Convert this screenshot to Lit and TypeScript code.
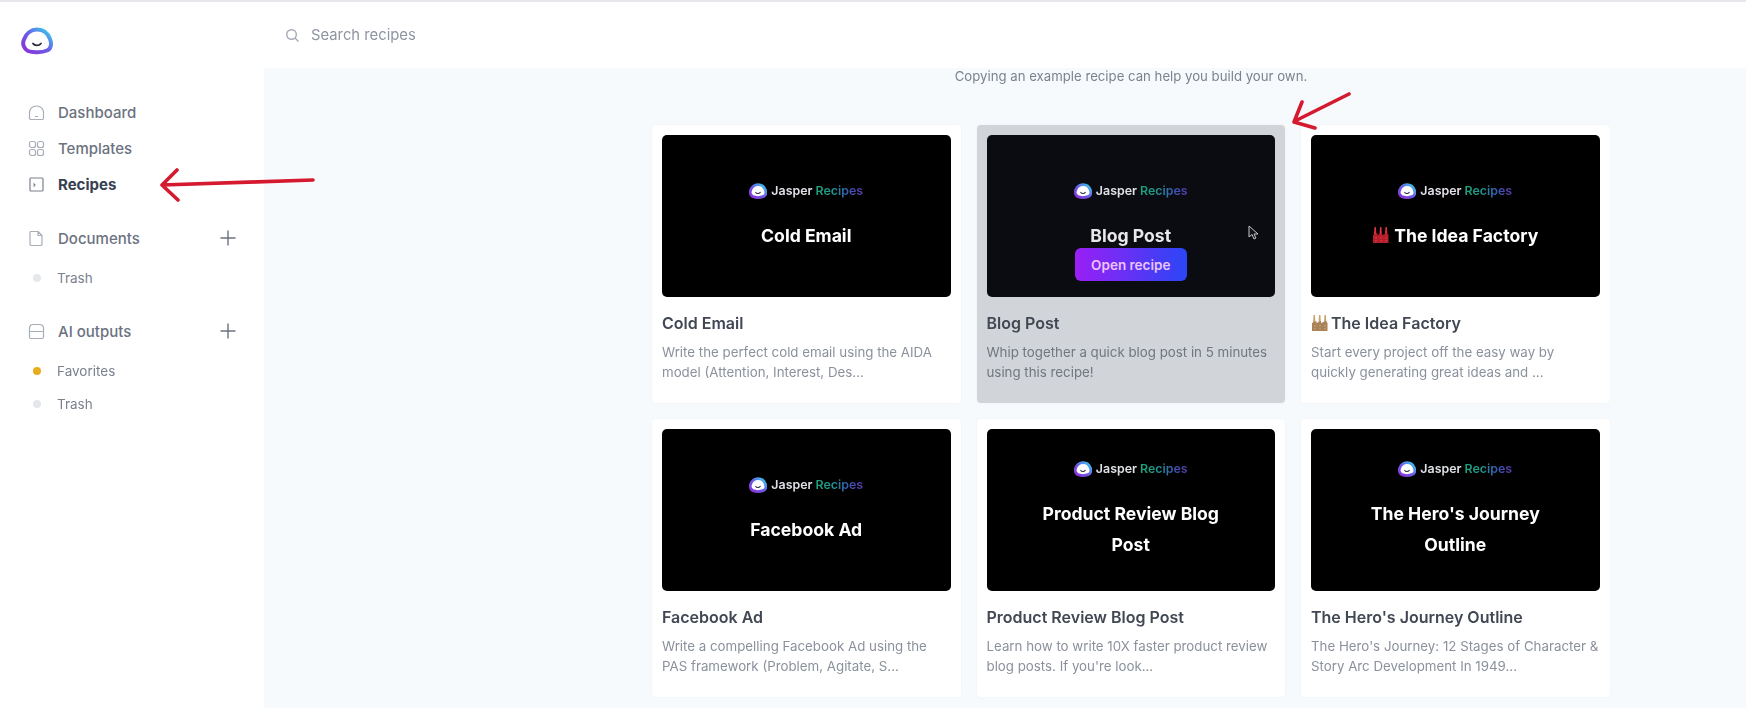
import { LitElement, html, css, svg } from "lit";
import { customElement } from "lit/decorators.js";

const factory = (color: string, roof: string) => html`<svg class="factory" viewBox="0 0 18 18" aria-hidden="true">
  ${svg`<path d="M2.5 1h1.4l.6 9h-2.600zM8 1h1.400l.6 9h-2.600zM13.500 1h1.400l.6 9h-2.600z" fill="${roof}"/>
  <path d="M1 9l4.500-2v2l4.500-2v2l5-2 1.500 2v8H1z" fill="${color}"/>
  <path d="M3 11h2v1.500H3zM8 11h2v1.500H8zM13 11h2v1.500h-2zM3 14h2v1.500H3zM8 14h2v1.500H8zM13 14h2v1.500h-2z" fill="${roof}" opacity=".7"/>`}
</svg>`;

const blob = (sw: number) => svg`
  <defs><linearGradient id="lg${sw}" x1="0" y1="1" x2="1" y2="0">
    <stop offset="0" stop-color="#8b2fd6"/><stop offset=".5" stop-color="#6a5ee8"/><stop offset="1" stop-color="#36d4ee"/>
  </linearGradient></defs>
  <path d="M16 2.500c7 0 11 4 13 9.500 2 5 1 10-3 11.500-5 2-14 2.500-19 .5-4-2-6-7-4-11.500 2-6 7-10 13-10z" fill="#fff" stroke="url(#lg${sw})" stroke-width="${sw}"/>
  <path d="M12 16.500c1.500 2.500 6 2.500 8 0" fill="none" stroke="#2b2b3a" stroke-width="1.800" stroke-linecap="round"/>`;

interface Recipe { thumb: string[]; title: string; desc: string[]; emoji?: boolean; hover?: boolean }

const recipes: Recipe[] = [
  { thumb: ["Cold Email"], title: "Cold Email", desc: ["Write the perfect cold email using the AIDA", "model (Attention, Interest, Des..."] },
  { thumb: ["Blog Post"], title: "Blog Post", desc: ["Whip together a quick blog post in 5 minutes", "using this recipe!"], hover: true },
  { thumb: ["The Idea Factory"], title: "The Idea Factory", desc: ["Start every project off the easy way by", "quickly generating great ideas and ..."], emoji: true },
  { thumb: ["Facebook Ad"], title: "Facebook Ad", desc: ["Write a compelling Facebook Ad using the", "PAS framework (Problem, Agitate, S..."] },
  { thumb: ["Product Review Blog", "Post"], title: "Product Review Blog Post", desc: ["Learn how to write 10X faster product review", "blog posts. If you're look..."] },
  { thumb: ["The Hero's Journey", "Outline"], title: "The Hero's Journey Outline", desc: ["The Hero's Journey: 12 Stages of Character &", "Story Arc Development In 1949..."] },
];

@customElement("app-root")
export class AppRoot extends LitElement {
  static styles = css`
    :host { display: block; width: 1746px; height: 708px; overflow: hidden; position: relative; background: #f7fafd; font-family: Inter, "Noto Sans", sans-serif; color: #6b7280; }
    .frame { display: flex; height: 708px; filter: blur(.6px); border-top: 2px solid #e5e7eb; box-sizing: border-box; }
    .side { width: 264px; flex: none; background: #fff; box-sizing: border-box; padding: 23px 0 0 28px; }
    .logo { display: block; width: 32px; height: 32px; margin: 0 0 37px -7px; }
    .row { display: flex; align-items: center; height: 36px; font-size: 15px; font-weight: 500; color: #6b7280; }
    .row.active { color: #374151; font-weight: 700; }
    .ic { width: 17px; height: 17px; flex: none; margin-right: 13px; fill: none; stroke: #a8aeb8; stroke-width: 1.2; stroke-linejoin: round; }
    .active .ic { stroke: #7b828e; }
    .plus { width: 16px; height: 16px; margin-left: auto; margin-right: 28px; stroke: #6b7280; stroke-width: 1.4; fill: none; }
    .section { margin-top: 18px; }
    .section + .section { margin-top: 19px; }
    .sub { display: flex; align-items: center; height: 33px; font-size: 13.5px; color: #7b828e; }
    .section .row + .sub { margin-top: 5px; }
    .dot { width: 8px; height: 8px; border-radius: 50%; background: #e5e7eb; margin: 0 16px 0 5px; flex: none; }
    .dot.gold { background: #e9ac1e; }
    .main { flex: 1; min-width: 0; display: flex; flex-direction: column; }
    .top { height: 66px; flex: none; background: #fff; display: flex; align-items: center; padding-left: 21px; gap: 11px; font-size: 14.8px; color: #8e95a1; }
    .top svg { width: 15px; height: 15px; stroke: #a5abb5; stroke-width: 1.4; fill: none; }
    .note { margin: 0; text-align: center; font-size: 13.2px; line-height: 17px; padding: 0 136px 0 388px; color: #7b828e; }
    .grid { display: grid; grid-template-columns: repeat(3, 1fr); gap: 16px; padding: 40px 136.5px 0 388px; grid-auto-rows: 278px; }
    .card { background: #fff; border-radius: 4px; padding: 10px; box-sizing: border-box; box-shadow: 0 0 2px rgba(17,24,39,.05); min-width: 0; }
    .card.hover { background: #d1d5da; }
    .thumb { position: relative; height: 162px; background: #000; border-radius: 5px; display: flex; flex-direction: column; align-items: center; justify-content: center; color: #fff; }
    .hover .thumb { background: #0b0c11; color: #e8e8ea; }
    .brand { display: flex; align-items: center; gap: 4px; font-size: 12.4px; font-weight: 600; color: #dfe1e6; margin-bottom: 20px; line-height: 16px; }
    .brand svg { width: 18px; height: 18px; }
    .grad { background: linear-gradient(90deg, #1fa37a 0%, #1f9a8f 35%, #3a58b8 70%, #5a3aa8 100%); -webkit-background-clip: text; background-clip: text; color: transparent; }
    .big { font-size: 17.6px; font-weight: 700; line-height: 31px; text-align: center; display: flex; align-items: center; gap: 4px; }
    .open { position: absolute; left: 50%; top: 113px; width: 112px; height: 33px; transform: translateX(-50%); border-radius: 6px; background: linear-gradient(90deg, #9a1ff5, #2b46f5); color: #eec4ff; font-size: 13.5px; font-weight: 600; display: flex; align-items: center; justify-content: center; }
    .cursor { position: absolute; right: 15px; top: 90px; width: 12px; height: 16px; }
    .title { font-size: 16px; font-weight: 600; color: #414753; margin-top: 15px; line-height: 22px; display: flex; align-items: center; gap: 2px; }
    .desc { font-size: 13.3px; line-height: 20px; color: #8b919c; margin-top: 8px; white-space: nowrap; }
    .hover .desc { color: #71767f; }
    .factory { width: 18px; height: 18px; flex: none; }
    .arrows { position: absolute; inset: 0; width: 1746px; height: 708px; pointer-events: none; fill: none; stroke: #d5192f; stroke-width: 3.6; stroke-linecap: round; stroke-linejoin: round; filter: blur(.4px); }
  `;

  private card(r: Recipe) {
    return html`<article class="card ${r.hover ? "hover" : ""}">
      <div class="thumb">
        <div class="brand"><svg viewBox="0 0 32 28">${blob(5)}</svg><span>Jasper <span class="grad">Recipes</span></span></div>
        ${r.thumb.map(l => html`<div class="big">${r.emoji ? factory("#b3202c", "#e2333f") : ""}${l}</div>`)}
        ${r.hover ? html`<div class="open">Open recipe</div>
          <svg class="cursor" viewBox="0 0 12 16"><path d="M1 1v11l3-2.500 2 4.500 2-1-2-4h4z" fill="#111318" stroke="#c5c7cc" stroke-width="1"/></svg>` : ""}
      </div>
      <div class="title">${r.emoji ? factory("#a9825a", "#c9a46e") : ""}${r.title}</div>
      <div class="desc">${r.desc.map(l => html`<div>${l}</div>`)}</div>
    </article>`;
  }

  render() {
    return html`<div class="frame">
      <aside class="side">
        <svg class="logo" viewBox="0 0 32 28">${blob(4)}</svg>
        <div class="row"><svg class="ic" viewBox="0 0 17 17"><path d="M1.500 14V8.500C1.500 5 4.500 2 8.500 2s7 3 7 6.500V14a1.500 1.500 0 0 1-1.500 1.500H3A1.500 1.500 0 0 1 1.500 14zM7 12.500h3"/></svg>Dashboard</div>
        <div class="row"><svg class="ic" viewBox="0 0 17 17"><rect x="1.500" y="1.500" width="6" height="6" rx="2"/><rect x="9.500" y="1.500" width="6" height="6" rx="2"/><rect x="1.500" y="9.500" width="6" height="6" rx="2"/><rect x="9.500" y="9.500" width="6" height="6" rx="2"/></svg>Templates</div>
        <div class="row active"><svg class="ic" viewBox="0 0 17 17"><rect x="2" y="2" width="13" height="13" rx="1"/><path d="M5.500 7.500l1.500 1.500-1.500 1.500"/></svg>Recipes</div>
        <div class="section">
          <div class="row"><svg class="ic" viewBox="0 0 17 17"><path d="M3 1.500h7l4 4V14a1.500 1.500 0 0 1-1.500 1.500h-9A1.500 1.500 0 0 1 2 14V2.500a1 1 0 0 1 1-1zM10 1.500v4h4"/></svg>Documents<svg class="plus" viewBox="0 0 16 16"><path d="M8 .5v15M.5 8h15"/></svg></div>
          <div class="sub"><span class="dot"></span>Trash</div>
        </div>
        <div class="section">
          <div class="row"><svg class="ic" viewBox="0 0 17 17"><path d="M1.500 8V5a3.500 3.500 0 0 1 3.500-3.500h7A3.500 3.500 0 0 1 15.500 5v9a1.500 1.500 0 0 1-1.500 1.500H3A1.500 1.500 0 0 1 1.500 14zM1.500 8.500h14"/></svg>AI outputs<svg class="plus" viewBox="0 0 16 16"><path d="M8 .5v15M.5 8h15"/></svg></div>
          <div class="sub"><span class="dot gold"></span>Favorites</div>
          <div class="sub"><span class="dot"></span>Trash</div>
        </div>
      </aside>
      <main class="main">
        <header class="top"><svg viewBox="0 0 15 15"><circle cx="6.500" cy="6.500" r="4.800"/><path d="M10 10l3.500 3.500"/></svg>Search recipes</header>
        <p class="note">Copying an example recipe can help you build your own.</p>
        <section class="grid">${recipes.map(r => this.card(r))}</section>
      </main>
    </div>
    <svg class="arrows" viewBox="0 0 1746 708">
      <path d="M313 180L162 185M177 170L162 185L178 200"/>
      <path d="M1349 94L1295 121M1302 102L1294 122L1315 128"/>
    </svg>`;
  }
}
